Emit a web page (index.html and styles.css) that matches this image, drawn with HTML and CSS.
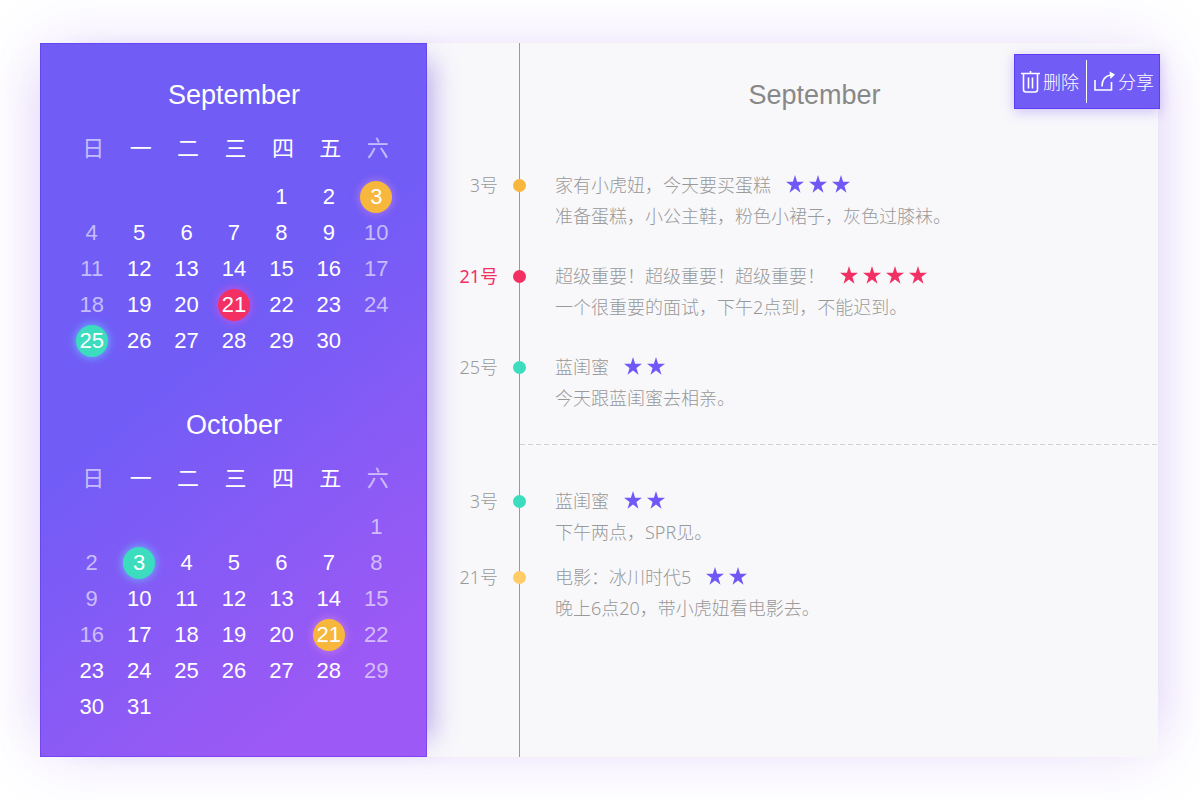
FILE: index.html
```
<!DOCTYPE html>
<html lang="zh-CN">
<head>
  <meta charset="UTF-8" />
  <meta name="viewport" content="width=device-width, initial-scale=1.0" />
  <title>日历</title>
  <link rel="stylesheet" href="styles.css">
</head>
<body>
  <svg width="0" height="0" class="defs" aria-hidden="true">
    <symbol id="star" viewBox="0 0 18 18">
      <path d="M9 0l2.1 6.7H18l-5.6 4.2 2.1 6.8L9 13.6l-5.5 4.1 2.1-6.8L0 6.7h6.9z" />
    </symbol>
  </svg>

  <main class="diary">
    <aside class="calendar">
      <h2>September</h2>
      <table>
        <thead>
          <tr><th class="off">日</th><th>一</th><th>二</th><th>三</th><th>四</th><th>五</th><th class="off">六</th></tr>
        </thead>
        <tbody>
          <tr><td></td><td></td><td></td><td></td><td>1</td><td>2</td><td><span class="mark orange">3</span></td></tr>
          <tr><td class="off">4</td><td>5</td><td>6</td><td>7</td><td>8</td><td>9</td><td class="off">10</td></tr>
          <tr><td class="off">11</td><td>12</td><td>13</td><td>14</td><td>15</td><td>16</td><td class="off">17</td></tr>
          <tr><td class="off">18</td><td>19</td><td>20</td><td><span class="mark red">21</span></td><td>22</td><td>23</td><td class="off">24</td></tr>
          <tr><td><span class="mark green">25</span></td><td>26</td><td>27</td><td>28</td><td>29</td><td>30</td><td></td></tr>
        </tbody>
      </table>

      <h2>October</h2>
      <table>
        <thead>
          <tr><th class="off">日</th><th>一</th><th>二</th><th>三</th><th>四</th><th>五</th><th class="off">六</th></tr>
        </thead>
        <tbody>
          <tr><td></td><td></td><td></td><td></td><td></td><td></td><td class="off">1</td></tr>
          <tr><td class="off">2</td><td><span class="mark green">3</span></td><td>4</td><td>5</td><td>6</td><td>7</td><td class="off">8</td></tr>
          <tr><td class="off">9</td><td>10</td><td>11</td><td>12</td><td>13</td><td>14</td><td class="off">15</td></tr>
          <tr><td class="off">16</td><td>17</td><td>18</td><td>19</td><td>20</td><td><span class="mark orange">21</span></td><td class="off">22</td></tr>
          <tr><td>23</td><td>24</td><td>25</td><td>26</td><td>27</td><td>28</td><td class="off">29</td></tr>
          <tr><td>30</td><td>31</td><td></td><td></td><td></td><td></td><td></td></tr>
        </tbody>
      </table>
    </aside>

    <section class="schedule">
      <h2>September</h2>

      <ul class="events">
        <li>
          <span class="date">3号</span>
          <span class="dot orange"></span>
          <div class="note">
            <h3>家有小虎妞，今天要买蛋糕
              <span class="stars"><svg><use href="#star" /></svg><svg><use href="#star" /></svg><svg><use href="#star" /></svg></span>
            </h3>
            <p>准备蛋糕，小公主鞋，粉色小裙子，灰色过膝袜。</p>
          </div>
        </li>
        <li class="urgent">
          <span class="date">21号</span>
          <span class="dot red"></span>
          <div class="note">
            <h3>超级重要！超级重要！超级重要！
              <span class="stars"><svg><use href="#star" /></svg><svg><use href="#star" /></svg><svg><use href="#star" /></svg><svg><use href="#star" /></svg></span>
            </h3>
            <p>一个很重要的面试，下午2点到，不能迟到。</p>
          </div>
        </li>
        <li>
          <span class="date">25号</span>
          <span class="dot green"></span>
          <div class="note">
            <h3>蓝闺蜜
              <span class="stars"><svg><use href="#star" /></svg><svg><use href="#star" /></svg></span>
            </h3>
            <p>今天跟蓝闺蜜去相亲。</p>
          </div>
        </li>
      </ul>

      <hr>

      <ul class="events compact">
        <li>
          <span class="date">3号</span>
          <span class="dot green"></span>
          <div class="note">
            <h3>蓝闺蜜
              <span class="stars"><svg><use href="#star" /></svg><svg><use href="#star" /></svg></span>
            </h3>
            <p>下午两点，SPR见。</p>
          </div>
        </li>
        <li>
          <span class="date">21号</span>
          <span class="dot yellow"></span>
          <div class="note">
            <h3>电影：冰川时代5
              <span class="stars"><svg><use href="#star" /></svg><svg><use href="#star" /></svg></span>
            </h3>
            <p>晚上6点20，带小虎妞看电影去。</p>
          </div>
        </li>
      </ul>
    </section>

    <div class="toolbar">
      <button type="button">
        <svg width="19" height="22" viewBox="0 0 19 22">
          <path d="M0 2.5h19M9.5 0v2.5M2.5 2.5v16q0 2.5 2.5 2.5h9q2.5 0 2.5-2.5v-16M7.5 6.5v11M11.5 6.5v11" />
        </svg>
        <span>删除</span>
      </button>
      <button type="button">
        <svg width="21" height="22" viewBox="0 0 21 22">
          <path d="M1 9v10h16.500v-8M8 15.500C8 9 10 5 17 4" />
          <path class="fill" d="M15.500 0.500l5.500 3-4.500 4.500z" />
        </svg>
        <span>分享</span>
      </button>
    </div>
  </main>
</body>
</html>
```
FILE: styles.css
```
* {
  box-sizing: border-box;
  margin: 0;
  padding: 0;
}
body {
  font-family: "Noto Sans", "Noto Sans CJK SC", sans-serif;
  font-size: 18px;
  font-weight: 300;
  color: #999;
  background: #fff;
  padding: 43px 42px 43px 40px;
}
.defs {
  position: absolute;
}
.diary {
  position: relative;
  display: flex;
  box-shadow: 0 0 60px rgba(137, 79, 231, 0.16),
    34px 0 40px -30px rgba(137, 79, 231, 0.12),
    -34px 0 40px -30px rgba(137, 79, 231, 0.12);
}
h2 {
  font-family: "Liberation Sans", Arial, sans-serif;
  font-size: 27px;
  font-weight: 400;
  line-height: 48px;
  text-align: center;
}

/* calendar */
.calendar {
  position: relative;
  flex: 0 0 387px;
  padding: 28px 27px 32px 28px;
  color: #fff;
  background: linear-gradient(140deg, #715cf6 42%, #9c59f5 86%);
  box-shadow: inset 0 0 0 1px rgba(80, 40, 235, 0.4),
    22px 0 26px -18px rgba(100, 60, 210, 0.45);
}
.calendar table {
  width: 100%;
  table-layout: fixed;
  border-collapse: collapse;
}
.calendar table + h2 {
  margin-top: 42px;
}
.calendar th {
  height: 60px;
  padding: 0 0 6px 3px;
  font-size: 22px;
  font-weight: 400;
}
.calendar td {
  height: 36px;
  font-family: "Liberation Sans", Arial, sans-serif;
  font-size: 22px;
  font-weight: 400;
  line-height: 32px;
  text-align: center;
}
.calendar .off {
  color: rgba(255, 255, 255, 0.6);
}
.mark {
  display: block;
  width: 32px;
  height: 32px;
  margin: 0 auto;
  border-radius: 50%;
}
.orange {
  background: #f6b73c;
}
.yellow {
  background: #ffcc66;
}
.red {
  background: #f33063;
}
.green {
  background: #3cdcbe;
}
.mark.orange {
  box-shadow: 0 0 10px rgba(255, 170, 220, 0.5);
}
.mark.red {
  box-shadow: 0 0 10px rgba(255, 80, 220, 0.7);
}
.mark.green {
  box-shadow: 0 0 10px rgba(100, 220, 255, 0.8);
}

/* schedule */
.schedule {
  flex: 1;
  padding-top: 28px;
  background: linear-gradient(#9a9a9a, #9a9a9a) 92px 0 / 1px 100% no-repeat #f8f8fb;
}
.schedule h2 {
  padding-left: 44px;
  color: #888;
}
.events {
  display: flex;
  flex-direction: column;
  gap: 29px;
  margin-top: 51px;
  list-style: none;
}
.events.compact {
  gap: 14px;
  margin-top: 41px;
}
.events li {
  display: grid;
  grid-template-columns: 71px 13px 1fr;
  line-height: 31px;
}
.date {
  text-align: right;
}
.dot {
  width: 13px;
  height: 13px;
  margin: 9px 0 0 15px;
  border-radius: 50%;
}
.note {
  padding-left: 44px;
}
.note h3 {
  display: flex;
  align-items: center;
  gap: 15px;
  font-size: 18px;
  font-weight: 300;
}
.stars {
  display: flex;
  gap: 5px;
  margin-bottom: 3px;
  fill: #6f58f6;
}
.stars svg {
  width: 18px;
  height: 18px;
}
.urgent .date {
  color: #f33063;
  font-weight: 400;
}
.urgent .stars {
  fill: #f33063;
}
hr {
  height: 1px;
  margin: 30px 0 0 93px;
  border: none;
  background: repeating-linear-gradient(to right, #d0d0d4 0 5px, transparent 5px 8px);
}

/* toolbar */
.toolbar {
  position: absolute;
  top: 11px;
  right: -2px;
  display: flex;
  padding: 6px 0;
  background: #715cf6;
  box-shadow: inset 0 0 0 1px #5c3df5, 0 3px 12px rgba(113, 70, 240, 0.3);
}
.toolbar button {
  display: flex;
  align-items: center;
  gap: 3px;
  height: 43px;
  padding: 0 7px;
  border: none;
  background: none;
  color: #fff;
  font: inherit;
  cursor: pointer;
}
.toolbar button + button {
  padding-right: 6px;
  border-left: 1px solid #fff;
}
.toolbar span {
  padding-bottom: 2px;
}
.toolbar svg {
  fill: none;
  stroke: #fff;
  stroke-width: 1.6;
}
.toolbar .fill {
  fill: #fff;
  stroke: none;
}
```
